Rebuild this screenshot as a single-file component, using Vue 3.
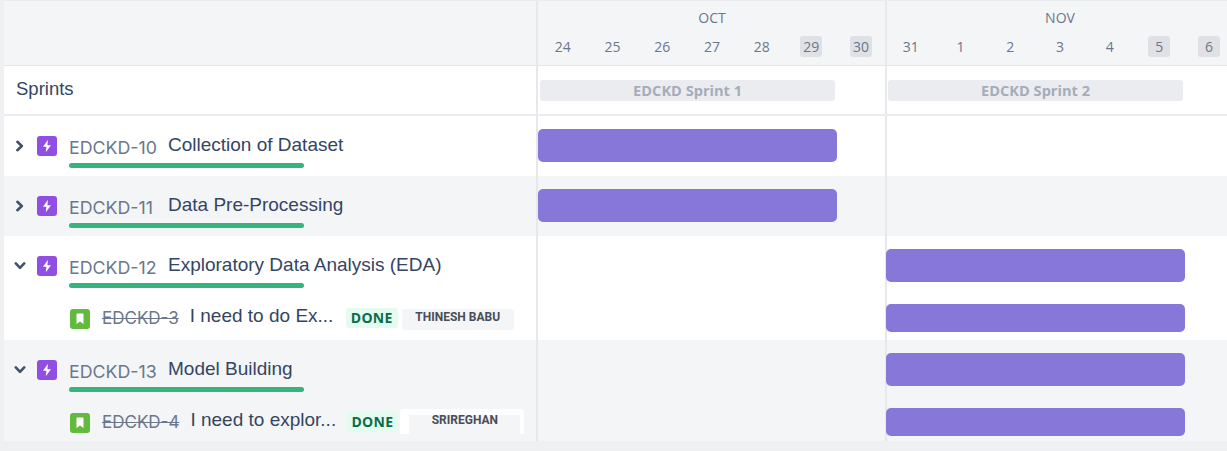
<script setup>
const octDays = [
  { n: 24 }, { n: 25 }, { n: 26 }, { n: 27 }, { n: 28 }, { n: 29, off: true }, { n: 30, off: true },
]
const novDays = [
  { n: 31 }, { n: 1 }, { n: 2 }, { n: 3 }, { n: 4 }, { n: 5, off: true }, { n: 6, off: true },
]
const rows = [
  { key: 'EDCKD-10', title: 'Collection of Dataset', open: false, shade: false, late: false },
  { key: 'EDCKD-11', title: 'Data Pre-Processing', open: false, shade: true, late: false },
  {
    key: 'EDCKD-12', title: 'Exploratory Data Analysis (EDA)', open: true, shade: false, late: true,
    child: { key: 'EDCKD-3', title: 'I need to do Ex...', who: 'THINESH BABU', halo: false },
  },
  {
    key: 'EDCKD-13', title: 'Model Building', open: true, shade: true, late: true,
    child: { key: 'EDCKD-4', title: 'I need to explor...', who: 'SRIREGHAN', halo: true },
  },
]
</script>

<template>
  <div class="gantt">
    <div class="row head">
      <div class="left"></div>
      <div class="track">
        <div class="month">
          <div class="month-name">OCT</div>
          <div class="days">
            <span v-for="d in octDays" :key="d.n" class="day"><b :class="{ off: d.off }">{{ d.n }}</b></span>
          </div>
        </div>
        <div class="month">
          <div class="month-name">NOV</div>
          <div class="days">
            <span v-for="d in novDays" :key="d.n" class="day"><b :class="{ off: d.off }">{{ d.n }}</b></span>
          </div>
        </div>
      </div>
    </div>

    <div class="row sprints">
      <div class="left sprints-label">Sprints</div>
      <div class="track grid">
        <div class="sprint first">EDCKD Sprint 1</div>
        <div class="sprint second">EDCKD Sprint 2</div>
      </div>
    </div>

    <div class="rows">
      <div v-for="r in rows" :key="r.key" class="group" :class="{ shade: r.shade }">
        <div class="row epic">
          <div class="left epic-left">
            <svg class="chev" :class="{ open: r.open }" width="12" height="12" viewBox="0 0 12 12">
              <path d="M3.4 1.8 7.8 6 3.4 10.2" fill="none" stroke="#42526e" stroke-width="2.6" stroke-linecap="round" stroke-linejoin="round" />
            </svg>
            <svg class="type" width="20" height="20" viewBox="0 0 20 20">
              <rect width="20" height="20" rx="3" fill="#904ee2" />
              <path d="M11 3.8 6 10.8H9.4L8.8 16.2 14 9.2H10.4Z" fill="#fff" />
            </svg>
            <div class="epic-text">
              <div class="epic-line">
                <span class="key epic-key">{{ r.key }}</span>
                <span class="title">{{ r.title }}</span>
              </div>
              <div class="progress"></div>
            </div>
          </div>
          <div class="track grid">
            <div class="bar" :class="{ late: r.late }"></div>
          </div>
        </div>
        <div v-if="r.child" class="row child">
          <div class="left child-left">
            <svg class="type child-type" width="20" height="20" viewBox="0 0 20 20">
              <rect width="20" height="20" rx="3" fill="#63ba3c" />
              <path d="M6.5 5.6a1 1 0 0 1 1-1h5a1 1 0 0 1 1 1v9.4L10 12.4 6.5 15Z" fill="#fff" />
            </svg>
            <span class="key struck">{{ r.child.key }}</span>
            <span class="title child-title">{{ r.child.title }}</span>
            <span class="done">DONE</span>
            <span class="who" :class="{ halo: r.child.halo }"><span class="who-name">{{ r.child.who }}</span></span>
          </div>
          <div class="track grid">
            <div class="bar late small"></div>
          </div>
        </div>
      </div>
    </div>
  </div>
</template>

<style scoped>
.gantt {
  width: 1227px;
  height: 451px;
  box-sizing: border-box;
  padding-left: 4px;
  padding-bottom: 10px;
  background: #eef0f2;
  overflow: hidden;
  font-family: "Open Sans", sans-serif;
  display: flex;
  flex-direction: column;
}
.row {
  display: flex;
}
.left {
  width: 534px;
  flex: none;
  box-sizing: border-box;
  border-right: 2px solid #e6e8ec;
}
.track {
  flex: none;
  width: 696px;
  display: flex;
  background-image: linear-gradient(#e6e8ec, #e6e8ec);
  background-size: 2px 100%;
  background-position: 347px 0;
  background-repeat: no-repeat;
}
.grid {
  display: grid;
  grid-template-columns: repeat(14, 49.71px);
  align-items: center;
}
.head {
  flex: none;
  height: 66px;
  background: #f4f5f7;
  border-top: 1px solid #e9ebee;
  border-bottom: 1px solid #e3e5e9;
  box-sizing: border-box;
}
.month {
  width: 348px;
  flex: none;
}
.month-name {
  text-align: center;
  font-size: 14px;
  line-height: 19px;
  color: #6b778c;
  padding-top: 7px;
}
.days {
  display: flex;
  margin-top: 9px;
}
.day {
  width: 49.71px;
  flex: none;
  display: flex;
  justify-content: center;
}
.day b {
  font-weight: 400;
  font-size: 14px;
  line-height: 21px;
  width: 22px;
  text-align: center;
  border-radius: 3px;
  color: #6b778c;
}
.day b.off {
  background: #dfe1e6;
}
.sprints {
  flex: none;
  height: 50px;
  background: #fff;
  border-bottom: 2px solid #ebecf0;
  box-sizing: border-box;
}
.sprints-label {
  font-family: "Liberation Sans", sans-serif;
  font-size: 18.5px;
  color: #344563;
  padding-left: 12px;
  display: flex;
  align-items: center;
  height: 100%;
  padding-bottom: 3px;
}
.sprint {
  height: 21px;
  margin-top: 1px;
  border-radius: 3px;
  background: #ebecf0;
  color: #a5adba;
  font-size: 14.6px;
  font-weight: 700;
  line-height: 21px;
  text-align: center;
}
.sprint.first {
  grid-column: 1 / span 6;
  margin-left: 2px;
  margin-right: 1px;
}
.sprint.second {
  grid-column: 8 / span 6;
  margin-left: 2px;
  margin-right: 1px;
}
.rows {
  flex: 1;
  min-height: 0;
  overflow: hidden;
  background: #fff;
}
.group.shade {
  background: #f4f5f7;
}
.epic {
  height: 60px;
}
.epic-left {
  display: flex;
  align-items: flex-start;
  padding-top: 20px;
}
.chev {
  margin: 4px 0 0 10px;
  flex: none;
}
.chev.open {
  transform: rotate(90deg);
}
.type {
  flex: none;
}
.epic-left .type {
  margin-left: 11px;
}
.epic-text {
  margin-left: 12px;
  width: 235px;
}
.epic-line {
  display: flex;
  align-items: flex-start;
  white-space: nowrap;
  height: 26px;
}
.key {
  font-family: "Inter", sans-serif;
  font-size: 17px;
  color: #6b778c;
  line-height: 26px;
}
.epic-key {
  font-size: 17.8px;
  line-height: 24px;
  width: 99px;
  flex: none;
}
.title {
  font-family: "Liberation Sans", sans-serif;
  font-size: 19px;
  line-height: 18px;
  color: #344563;
}
.progress {
  height: 5px;
  width: 235px;
  margin-top: 1px;
  border-radius: 3px;
  background: #36b37e;
}
.bar {
  grid-column: 1 / span 6;
  height: 33px;
  margin: 0 -1px 2px 0;
  border-radius: 5px;
  background: #8777d9;
}
.bar.late {
  grid-column: 8 / span 6;
  margin-right: -1px;
}
.bar.small {
  height: 28px;
  margin-bottom: 0;
}
.child {
  height: 44px;
}
.child-left {
  display: flex;
  align-items: center;
  padding-left: 66px;
  padding-bottom: 1px;
  white-space: nowrap;
}
.child-type {
  margin-top: 2px;
}
.struck {
  text-decoration: line-through;
  margin-left: 12px;
}
.child-title {
  margin-left: 11px;
  margin-bottom: 4px;
  width: 144px;
  flex: none;
}
.done {
  margin-left: 12px;
  font-weight: 700;
  font-size: 14px;
  letter-spacing: 0.3px;
  line-height: 20px;
  padding: 0 5px;
  border-radius: 3px;
  color: #0c6b4b;
  background: #e3fcef;
}
.who {
  margin: 4px 0 0 4px;
  width: 112px;
  height: 21px;
  border-radius: 3px;
  background: #f4f5f7;
  display: flex;
  justify-content: center;
  font-family: "Roboto", sans-serif;
  font-weight: 700;
  font-size: 12px;
  line-height: 17px;
  color: #4a4d55;
}
.who.halo {
  width: 124px;
  height: 25px;
  margin: 0 0 0 2px;
  padding: 6px 4px 0 9px;
  box-sizing: border-box;
  background: #fff;
  border-radius: 3px 3px 0 0;
  line-height: 10px;
}
.who.halo .who-name {
  width: 100%;
  text-align: center;
  background: #f4f5f7;
}
</style>
